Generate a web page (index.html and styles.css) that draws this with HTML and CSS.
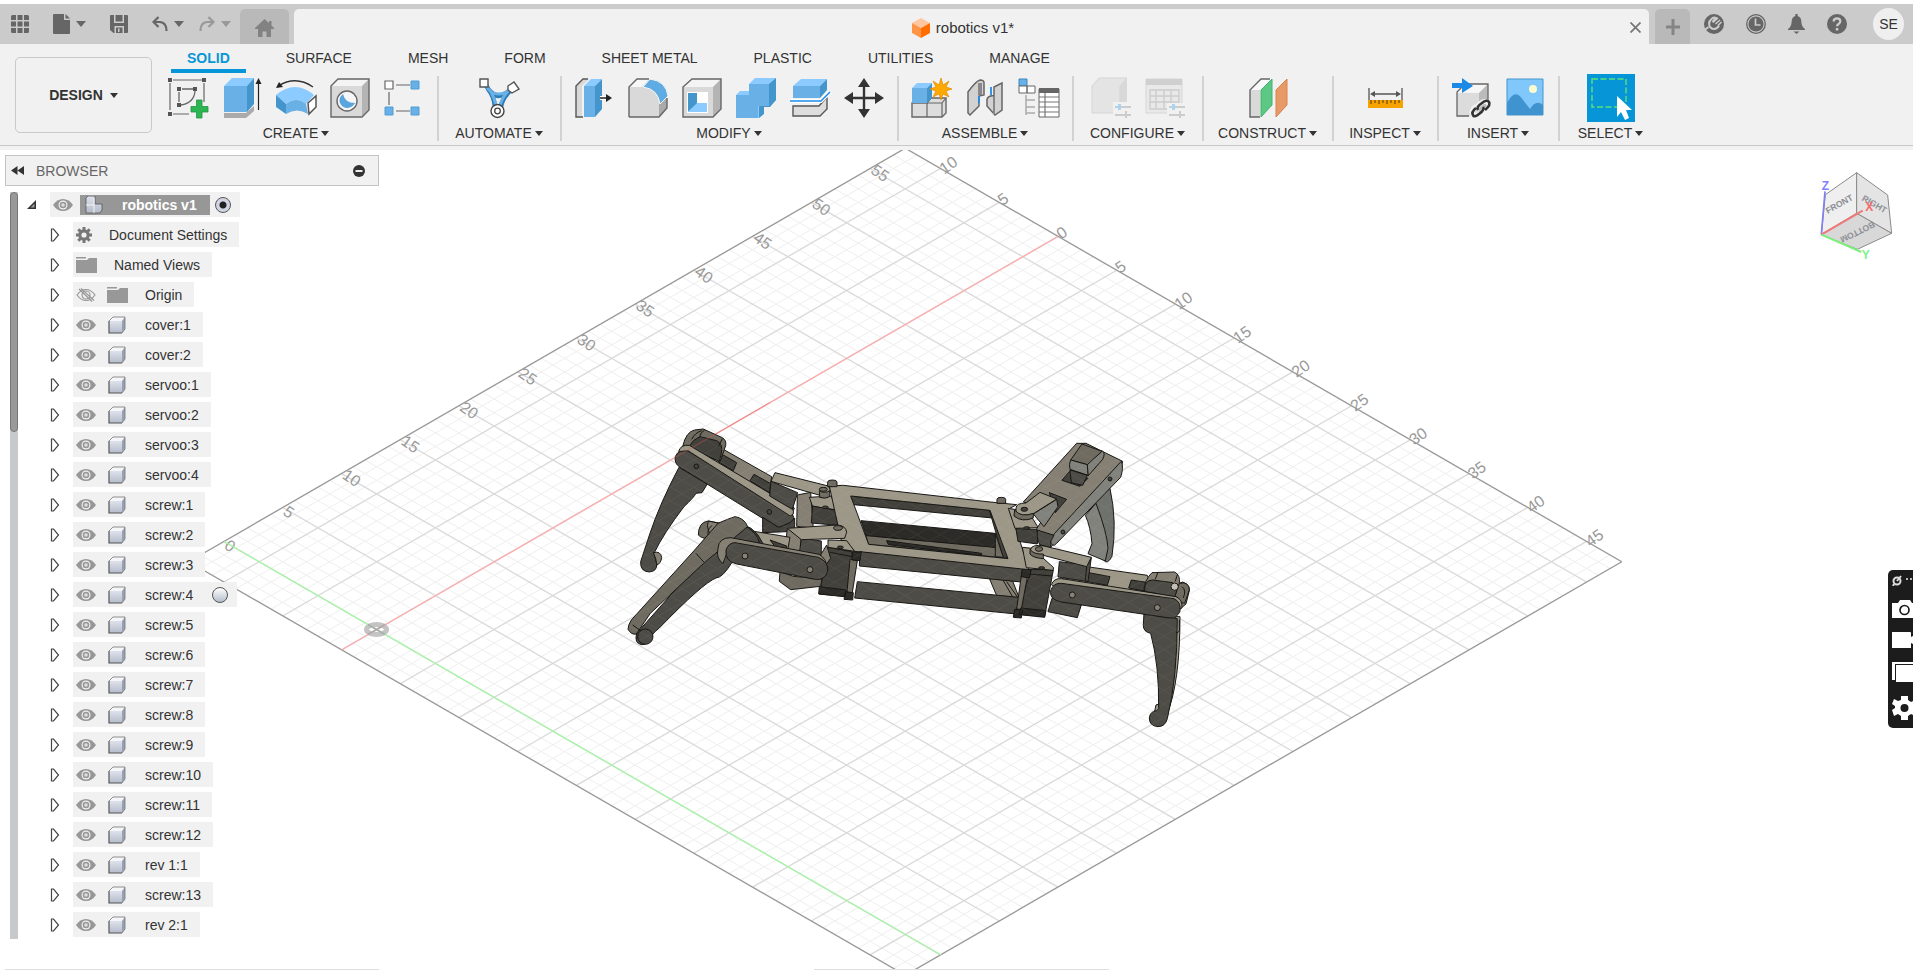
FILE: index.html
```
<!DOCTYPE html>
<html lang="en">
<head>
<meta charset="utf-8">
<title>robotics v1*</title>
<link rel="stylesheet" href="styles.css">
</head>
<body>
<svg class="sprite" aria-hidden="true">
  <defs>
    <linearGradient id="cubeFace" x1="0" y1="0" x2="0" y2="1"><stop offset="0" stop-color="#dfe2ec"/><stop offset="1" stop-color="#b4bbca"/></linearGradient>
    <symbol id="i-open" viewBox="0 0 10 14"><path d="M1.5 1h2L8.500 7 3.500 13h-2z" fill="#fff" stroke="#444" stroke-width="1.200"/></symbol>
    <symbol id="i-eye" viewBox="0 0 20 14"><path d="M0 7Q4 1 10 1t10 6q-4 6-10 6T0 7z" fill="#979797"/><circle cx="10" cy="7" r="4.500" fill="#f1f1f1"/><circle cx="10" cy="7" r="3.300" fill="#979797"/><circle cx="10" cy="7" r="1.800" fill="#ddd"/></symbol>
    <symbol id="i-eyeoff" viewBox="0 0 20 14"><g fill="none" stroke="#979797" stroke-width="1.200"><path d="M1 7q4-5.500 9-5.500T19 7q-4 5.500-9 5.500T1 7z"/><circle cx="10" cy="7" r="4"/><path d="M3 1l13 12.500M5 .5l13 12"/></g></symbol>
    <symbol id="i-cube" viewBox="0 0 18 18"><path d="M1 5l4-4h12l-3 4z" fill="#f6f6f8"/><path d="M14 5l3-4v12l-3 4z" fill="#98a1b3"/><path d="M1 5h13v12H1z" fill="url(#cubeFace)"/><path d="M1 5l4-4h12v12l-3 4" fill="none" stroke="#777" stroke-width=".8"/><path d="M1 5v12h13" fill="none" stroke="#555" stroke-width="1.200"/></symbol>
    <symbol id="i-folder" viewBox="0 0 21 16"><path d="M0 0h10v1.500H0zM0 3h11l2-2h8v15H0z" fill="#989898"/></symbol>
  </defs>
</svg>

<div class="app">
<header class="titlebar">
  <div class="quick">
    <button class="icon-btn" aria-label="Data panel"><svg width="18" height="18" viewBox="0 0 18 18" fill="#666"><path d="M0 1.500Q0 0 1.500 0H5v5H0zM6.500 0h5v5h-5zM13 0h3.500Q18 0 18 1.500V5h-5zM0 6.500h5v5H0zM6.500 6.500h5v5h-5zM13 6.500h5v5h-5zM0 13h5v5H1.500Q0 18 0 16.500zM6.500 13h5v5h-5zM13 13h5v3.500q0 1.500-1.500 1.500H13z"/></svg></button>
    <button class="icon-btn" aria-label="File"><svg width="17" height="20" viewBox="0 0 17 20" fill="#666"><path d="M1 0h10v6h6v13q0 1-1 1H1q-1 0-1-1V1q0-1 1-1z"/><path d="M12.500 0L17 4.600h-4.500z"/></svg><span class="caret caret--lg"></span></button>
    <button class="icon-btn" aria-label="Save"><svg width="18" height="18" viewBox="0 0 18 18"><path d="M1 0h16q1 0 1 1v16q0 1-1 1H3.500L0 15V1q0-1 1-1z" fill="#666"/><path d="M4 0h1.500v6.500h7V0H14v8H4zM4.500 18v-7H14v7h-1.500v-5.500H6V18z" fill="#ccc"/><path d="M8 13.500h1.500V17H8z" fill="#ccc"/></svg></button>
    <div class="history">
      <button class="icon-btn" aria-label="Undo"><svg width="16" height="16" viewBox="0 0 16 16" fill="none" stroke="#666" stroke-width="2.200"><path d="M6.500 1L1.500 6l5 5M1.500 6H8q6.500.5 6.500 9"/></svg><span class="caret caret--lg"></span></button>
      <button class="icon-btn" aria-label="Redo"><svg width="16" height="16" viewBox="0 0 16 16" fill="none" stroke="#999" stroke-width="2.200"><path d="M9.500 1l5 5-5 5M14.500 6H8Q1.500 6.500 1.500 15"/></svg><span class="caret caret--lg caret--dim"></span></button>
    </div>
  </div>
  <button class="tab tab--home" aria-label="Home"><svg width="19" height="18" viewBox="0 0 19 18" fill="#828282"><path d="M9.500 0L14 4V2h2.500v4.500L19 9v1h-3v8h-4.500v-5.500h-4V18H3v-8H0V9z"/></svg></button>
  <div class="tab tab--doc">
    <div class="doc-title"><svg width="18" height="20" viewBox="0 0 18 20"><path d="M9 0l9 5-9 5-9-5z" fill="#ffc7a0"/><path d="M0 5l9 5v10l-9-5z" fill="#ff9447"/><path d="M18 5l-9 5v10l9-5z" fill="#ff6d00"/></svg><span>robotics v1*</span></div>
    <button class="icon-btn" aria-label="Close tab"><svg width="11" height="11" viewBox="0 0 11 11" stroke="#777" stroke-width="1.800"><path d="M.5.5l10 10M10.500.5l-10 10"/></svg></button>
  </div>
  <button class="tab tab--new" aria-label="New tab"><svg width="14" height="16" viewBox="0 0 14 16" fill="#858585"><path d="M5.500 0h3v6.500H14v3H8.500V16h-3V9.500H0v-3h5.500z"/></svg></button>
  <div class="account">
    <button class="icon-btn" aria-label="Extensions"><svg width="20" height="20" viewBox="0 0 20 20"><circle cx="10" cy="10" r="10" fill="#666"/><path d="M0 16.500l4.500-3.500M6 13Q3.500 8 8 4.500q2-1.500 4-.5L8.500 8M6 13q2.500 3 6 1.500 2-.7 3-3" fill="none" stroke="#ccc" stroke-width="2"/><path d="M9 8.500L14 4M11.500 10l4.500-4M14 11.500l3.500-3.500" stroke="#ccc" stroke-width="1.500"/></svg></button>
    <button class="icon-btn" aria-label="Job status"><svg width="20" height="20" viewBox="0 0 20 20"><circle cx="10" cy="10" r="9.300" fill="none" stroke="#666" stroke-width="1.300"/><circle cx="10" cy="10" r="7.600" fill="#666"/><path d="M9.500 4.500V11h5" fill="none" stroke="#ccc" stroke-width="1.700"/></svg></button>
    <button class="icon-btn" aria-label="Notifications"><svg width="17" height="20" viewBox="0 0 17 20" fill="#666"><path d="M7.300 0h2.400v2Q13 3 13.300 7q.2 6 3.700 8v1H0v-1q3.500-2 3.700-8Q4 3 7.300 2zM5.500 17.500h6L8.500 20z"/></svg></button>
    <button class="icon-btn" aria-label="Help"><svg width="20" height="20" viewBox="0 0 20 20"><circle cx="10" cy="10" r="10" fill="#666"/><path d="M6.500 7.500Q7 4.300 10 4.300q3.300.1 3.300 3 0 1.600-1.700 2.600-1.600 1-1.600 2.300" fill="none" stroke="#ccc" stroke-width="2.300"/><path d="M8.800 14h2.500v2.500H8.800z" fill="#ccc"/></svg></button>
    <button class="avatar">SE</button>
  </div>
</header>

<div class="ribbon">
  <button class="workspace">DESIGN <span class="caret"></span></button>
  <div class="ribbon-main">
    <nav class="ribbon-tabs">
      <button class="rtab rtab--on">SOLID</button><button class="rtab">SURFACE</button><button class="rtab">MESH</button><button class="rtab">FORM</button><button class="rtab">SHEET METAL</button><button class="rtab">PLASTIC</button><button class="rtab">UTILITIES</button><button class="rtab">MANAGE</button>
    </nav>
    <div class="groups">
      <section class="group">
        <div class="tools">
          <button class="tool" aria-label="Create sketch"><svg viewBox="0 0 40 40"><path d="M5 2h29M2 5v27M5 36h16M36 5v19" stroke="#666" stroke-width="1.200" fill="none"/><path d="M11 14v10M14 11h11M27 13q-1 12-14 14" stroke="#666" stroke-width="1.300" fill="none"/><path d="M0 0h4v4H0zM34 0h4v4h-4zM0 34h4v4H0zM9 9h4v4H9zM25 9h4v4h-4zM9 25h4v4H9z" fill="#555"/><path d="M28.500 22h5.500v6.500h6V34h-6v6h-5.500v-6H23v-5.500h5.500z" fill="#2db552" stroke="#219440" stroke-width=".8"/></svg></button>
          <button class="tool" aria-label="Extrude"><svg viewBox="0 0 40 40"><path d="M2 35h22l8-7v5l-8 7H2z" fill="#aaa"/><path d="M2 8l8-8h22l-7 8z" fill="#8bcbff"/><path d="M2 8h23v26H2z" fill="#68b0e5"/><path d="M25 8l7-8v26l-7 8z" fill="#4595cd"/><path d="M36.500 3v29" stroke="#222" stroke-width="1.200"/><path d="M36.500 0l3 6h-6z" fill="#222"/></svg></button>
          <button class="tool" aria-label="Revolve"><svg viewBox="0 0 40 40"><path d="M0 17Q19 1 38 17l-8 9q-11-8-20 0z" fill="#8bcbff"/><path d="M0 17l10 9v10L0 29z" fill="#4595cd"/><path d="M10 26Q20 18 30 26l2 10q-11-7-22 0z" fill="#68b0e5"/><path d="M32 25l8-7v11l-7 7z" fill="#fff" stroke="#555" stroke-width="1.500"/><path d="M2 8Q20-3 37 9" fill="none" stroke="#333" stroke-width="1.300"/><path d="M0 10l3-6 4 5z" fill="#222"/></svg></button>
          <button class="tool" aria-label="Hole"><svg viewBox="0 0 40 40"><path d="M1 8l7-7h31l-7 7z" fill="#f4f4f4"/><path d="M32 8l7-7v31l-7 7z" fill="#b4b4b4"/><path d="M1 8h31v31H1z" fill="#d9d9d9"/><path d="M1 8l7-7h31v31l-7 7H1z" fill="none" stroke="#666" stroke-width="1.400"/><circle cx="17" cy="23" r="10" fill="#f6f6f6" stroke="#666" stroke-width="1.400"/><path d="M13 16q-5 4-3 9 2 5 8 5 5-1 7-5-10 0-12-9z" fill="#5aa5dd"/></svg></button>
          <button class="tool" aria-label="Rectangular pattern"><svg viewBox="0 0 40 40"><path d="M12 7h14M5 14v13M12 33h14" stroke="#666" stroke-width="1.200"/><path d="M1 3h8v8H1z" fill="#fff" stroke="#666" stroke-width="1.200"/><path d="M27 3h8v8h-8zM27 29h8v8h-8zM1 29h8v8H1z" fill="#68b0e5" stroke="#4f9dd4"/></svg></button>
        </div>
        <button class="group-label">CREATE <span class="caret"></span></button>
      </section>
      <section class="group group--narrow">
        <div class="tools"><button class="tool" aria-label="Automated modeling"><svg viewBox="0 0 40 40"><path d="M7 7q4 9 12 11 9-1 14-9M9 11q6 7 7 18M31 13q-8 8-9 16" fill="none" stroke="#2f7db8" stroke-width="4.500"/><path d="M7 7q4 9 12 9 9 0 14-7M12 14q4 7 5 14M29 13q-7 8-8 15" fill="none" stroke="#68b0e5" stroke-width="3"/><circle cx="18.500" cy="33" r="6.500" fill="#fff" stroke="#444" stroke-width="1.400"/><circle cx="18.500" cy="33" r="2.800" fill="none" stroke="#444" stroke-width="1.300"/><path d="M1 1h8v8H1zM29 8l6-4 5 7-7 4-4-3z" fill="#fff" stroke="#555" stroke-width="1.400"/></svg></button></div>
        <button class="group-label">AUTOMATE <span class="caret"></span></button>
      </section>
      <section class="group">
        <div class="tools">
          <button class="tool" aria-label="Press pull"><svg viewBox="0 0 40 40"><path d="M8 39H2V8l7-7h6l-7 7z" fill="#d9d9d9"/><path d="M9 39H2V8l7-7h5" fill="none" stroke="#555" stroke-width="1.400"/><path d="M10 8l7-7h11l-7 7z" fill="#8bcbff"/><path d="M10 8h11v31H10z" fill="#68b0e5"/><path d="M21 8l7-7v30l-7 8z" fill="#4595cd"/><path d="M26 20h7" stroke="#fff" stroke-width="4"/><path d="M26 20h7" stroke="#222" stroke-width="1.500"/><path d="M32 16l6 4-6 4z" fill="#222"/></svg></button>
          <button class="tool" aria-label="Fillet"><svg viewBox="0 0 40 40"><path d="M1 39V9l8-8h12q17 3 18 19v10l-8 9z" fill="#d9d9d9"/><path d="M1 9l8-8h12l-7 8z" fill="#f7f7f7"/><path d="M31 39V26l8-6v10z" fill="#aaa"/><path d="M1 39V9l8-8h12M39 20v10l-8 9H1" fill="none" stroke="#666" stroke-width="1.400"/><path d="M15 9l7-8q16 2 18 17l-8 8Q30 11 15 9z" fill="#5fabe3" stroke="#f6f6f6"/></svg></button>
          <button class="tool" aria-label="Shell"><svg viewBox="0 0 40 40"><path d="M1 9l9-8h29l-8 8z" fill="#f4f4f4"/><path d="M31 9l8-8v30l-8 8z" fill="#b4b4b4"/><path d="M1 9h30v30H1z" fill="#d9d9d9"/><path d="M1 9l9-8h29v30l-8 8H1z" fill="none" stroke="#666" stroke-width="1.400"/><path d="M5 14h21v21H5z" fill="#fff"/><path d="M6 15h9v11l-9 8z" fill="#4595cd"/><path d="M15 25h10v9H6z" fill="#8bcbff"/></svg></button>
          <button class="tool" aria-label="Combine"><svg viewBox="0 0 40 40"><path d="M0 17l4-4h9V6l6-6h21v22l-7 7h-6v7l-4 4H0z" fill="#8bcbff"/><path d="M0 17h13V6h20v22H22v12H0z" fill="#68b0e5"/><path d="M33 6l7-6v22l-6 7h-6v7l-5 4V28h10z" fill="#4595cd"/></svg></button>
          <button class="tool" aria-label="Split body"><svg viewBox="0 0 40 40"><path d="M3 28h26l8-9v12l-7 7H3z" fill="#ddd" stroke="#555" stroke-width="1.400"/><path d="M3 8l8-7h26l-7 7z" fill="#8bcbff"/><path d="M3 8h27v12H3z" fill="#68b0e5"/><path d="M30 8l7-7v11l-7 8z" fill="#4595cd"/><path d="M0 23h31l9-9" fill="none" stroke="#fff" stroke-width="4"/><path d="M0 23h31l9-9" fill="none" stroke="#1d8ce8" stroke-width="1.500"/></svg></button>
          <button class="tool" aria-label="Move"><svg viewBox="0 0 40 40"><path d="M20 6v28M6 20h28" stroke="#333" stroke-width="2.400"/><path d="M20 0l6 9H14zM20 40l6-9H14zM0 20l9-6v12zM40 20l-9-6v12z" fill="#333"/></svg></button>
        </div>
        <button class="group-label">MODIFY <span class="caret"></span></button>
      </section>
      <section class="group">
        <div class="tools">
          <button class="tool" aria-label="New component"><svg viewBox="0 0 40 40"><path d="M1 25h15l4-5h15v15l-4 4H1z" fill="#ddd" stroke="#666" stroke-width="1.400"/><path d="M16 39V25h15l4-5M31 25v14" fill="none" stroke="#666" stroke-width="1.200"/><path d="M1 10l5-5h15l-5 5z" fill="#8bcbff"/><path d="M1 10h15v15H1z" fill="#68b0e5"/><path d="M16 10l5-5v15l-5 5z" fill="#4595cd"/><path d="M30 0l2 7 6-4-3 6 6 2-6 2 3 6-6-3-2 6-2-6-6 3 3-6-6-2 6-2-3-6 6 4z" fill="#ffa800" stroke="#e08c00" stroke-width=".7"/></svg></button>
          <button class="tool" aria-label="Joint"><svg viewBox="0 0 40 40"><path d="M3 14Q11 3 15 2q4 0 4 3v12l-5 1v10L5 37l-2-2z" fill="#d2d2d2" stroke="#666" stroke-width="1.500"/><path d="M15 5v12" stroke="#888" stroke-width="4"/><path d="M22 21q2-4 7-3V9l8-4v27l-7 5-8-9z" fill="#d2d2d2" stroke="#666" stroke-width="1.500"/><path d="M29 18v18" stroke="#888" stroke-width="2"/><path d="M14 18v7M26 9v8" stroke="#1d8ce8" stroke-width="1.800"/></svg></button>
          <button class="tool" aria-label="Bill of materials"><svg viewBox="0 0 40 40"><path d="M0 1h8v7H0z" fill="#68b0e5" stroke="#3d87bd"/><path d="M0 8h8v7H0zM8 8h8v7H8z" fill="#fff" stroke="#666"/><path d="M7 17v20M7 22h9M7 29h9M7 35h9" stroke="#aaa" stroke-width="1.500"/><path d="M20 11h20v28H20z" fill="#fff" stroke="#666"/><path d="M20 10h20v5H20z" fill="#666"/><path d="M20 19h20M20 24h20M20 29h20M20 34h20M26 15v24" stroke="#777" stroke-width="1.200"/></svg></button>
        </div>
        <button class="group-label">ASSEMBLE <span class="caret"></span></button>
      </section>
      <section class="group group--mid">
        <div class="tools">
          <button class="tool" aria-label="Configure" disabled><svg viewBox="0 0 40 40"><path d="M1 8l7-8h28l-7 8v27H1z" fill="#e4e4e4" stroke="#d5d5d5"/><path d="M29 8l7-8v24l-7 5z" fill="#d8d8d8"/><path d="M22 24h18v16H22z" fill="#f1f1f1"/><path d="M24 29h16M24 37h16M29 26v6M35 33v7" stroke="#ccc" stroke-width="2"/><path d="M26 29h5M28 26v6" stroke="#a9d4f3" stroke-width="2"/></svg></button>
          <button class="tool" aria-label="Configuration table" disabled><svg viewBox="0 0 40 40"><path d="M1 1h36v34H1z" fill="#e9e9e9" stroke="#d5d5d5"/><path d="M1 1h36v6H1z" fill="#d0d0d0"/><path d="M5 12h29v19H5zM5 18h29M5 24h29M11 12v19M19 12v19M26 12v19" fill="none" stroke="#ccc" stroke-width="1.400"/><path d="M22 25h18v15H22z" fill="#f1f1f1"/><path d="M24 29h16M24 37h16M29 26v6M35 33v7" stroke="#ccc" stroke-width="2"/><path d="M26 29h5M28 26v6" stroke="#a9d4f3" stroke-width="2"/></svg></button>
        </div>
        <button class="group-label">CONFIGURE <span class="caret"></span></button>
      </section>
      <section class="group group--mid">
        <div class="tools"><button class="tool" aria-label="Offset plane"><svg viewBox="0 0 40 40"><path d="M2 12L14 1h9L12 12v27H2z" fill="#fafafa"/><path d="M2 12h10v27H2z" fill="#d9d9d9"/><path d="M12 39H2V12L13 1h9" fill="none" stroke="#666" stroke-width="1.400"/><path d="M13 12L24 1v26L13 39z" fill="#5cc883" stroke="#45b26d"/><path d="M28 12L39 1v26L28 39z" fill="#e89a66" stroke="#d6844c"/></svg></button></div>
        <button class="group-label">CONSTRUCT <span class="caret"></span></button>
      </section>
      <section class="group group--slim">
        <div class="tools"><button class="tool" aria-label="Measure"><svg viewBox="0 0 40 40"><path d="M4 10v12M37 10v12M7 16h26" stroke="#555" stroke-width="1.300"/><path d="M5 16l5-3v6zM36 16l-5-3v6z" fill="#555"/><path d="M3 22h35v8H3z" fill="#f6a200"/><path d="M6 22v4M10 22v3M14 22v4M18 22v3M22 22v4M26 22v3M30 22v4M34 22v3" stroke="#704900" stroke-width="1.200"/></svg></button></div>
        <button class="group-label">INSPECT <span class="caret"></span></button>
      </section>
      <section class="group">
        <div class="tools">
          <button class="tool" aria-label="Insert derive"><svg viewBox="0 0 40 40"><path d="M6 14l8-8h23l-9 9z" fill="#f6f6f6"/><path d="M28 15l9-9v24l-9 7z" fill="#bbb"/><path d="M6 15h22v23H6z" fill="#dcdcdc"/><path d="M18 38H6V14l8-8h23v16" fill="none" stroke="#666" stroke-width="1.300"/><path d="M1 5h10V0l11 8-11 7v-5H1z" fill="#1b8ae6"/><g fill="none" stroke="#f1f1f1" stroke-width="5"><path d="M26 29q5-7 10-5 5 3-1 8M34 31q-5 8-11 6-5-3 2-9"/></g><g fill="none" stroke="#333" stroke-width="2.600"><path d="M27 32q-2-3 4-7 5-4 7-1 2 3-4 8M32 29q2 3-4 7-5 4-6 1-2-3 3-7"/></g></svg></button>
          <button class="tool" aria-label="Insert image"><svg viewBox="0 0 40 40"><path d="M2 1h36v36H2z" fill="#80c8fb" stroke="#4595cd"/><circle cx="28" cy="11" r="4" fill="#fffbd0"/><path d="M2 25q8-16 16-3l7 9q6-10 13-4v10H2z" fill="#3f93cf"/></svg></button>
        </div>
        <button class="group-label">INSERT <span class="caret"></span></button>
      </section>
      <section class="group group--last">
        <div class="tools"><button class="tool tool--on" aria-label="Select"><svg viewBox="0 0 40 40"><path d="M1 1h34v28H1z" fill="none" stroke="#5be07c" stroke-width="1.400" stroke-dasharray="6 2.500"/><path d="M26 18v21l4-5 4 8 4-2-3-8h6z" fill="#fff"/></svg></button></div>
        <button class="group-label">SELECT <span class="caret"></span></button>
      </section>
    </div>
  </div>
</div>

<main class="viewport">
  <svg class="scene" viewBox="0 150 1913 820" preserveAspectRatio="xMinYMin slice" role="img" aria-label="Walking robot on the ground grid">
    <g id="grid"></g>
    <g id="labels" class="grid-labels"></g>
    <ellipse cx="376.500" cy="629.500" rx="10" ry="5" fill="none" stroke="#c4c4c4" stroke-width="5"/>
    <path d="M341.500 650L1058 236.500" stroke="#ffaaaa" stroke-width="1.300"/>
    <path d="M224 541.500L941 955" stroke="#a4f7a4" stroke-width="1.300"/>
    <path d="M368 624.500l17 10M368 634.500l17-10" stroke="#aaa" stroke-width="1.500"/>

    <g class="model">
      <!-- rear left leg -->
      <g transform="translate(600 410) scale(.3333)">
        <path class="d2" d="M237 172Q180 280 150 370L122 455q-2 30 26 31 24-2 22-24l-8-32q30-62 90-140 30-28 36-40l18-2 16-26z"/>
        <path class="l2" d="M160 428q22-6 25 14-2 18-14 23-2-18-11-37z"/>
        <path class="l2" d="M370 118l145 82-7 50 75 44-10 26-308-205z"/>
        <path class="d1" d="M370 135l40 23-10 24-45-26zM462 193l50 28-3 28-59-37z"/>
        <path class="l3" d="M248 110q10-45 36-50l26-3 57 26q13 8 10 24l-16 46-60-20z"/>
        <path class="d1" d="M265 112q15-25 35-32l50 12q20 10 14 38l-6 24z"/>
        <path class="ln" d="M275 88q10-20 30-26M298 82q4-16 16-22M355 110l12-24"/>
        <path class="d2" d="M262 122q-26-6-36 18-4 20 14 32l295 182q25 6 40-14 14-20-4-32z"/>
        <path class="l1" d="M236 125q5-22 32-19l302 180q12 8 10 26l-9 6L264 122z"/>
        <circle class="d1" cx="289" cy="169" r="7"/><circle class="d1" cx="508" cy="306" r="7"/>
      </g>
      <!-- rear left bracket and servo -->
      <g transform="translate(760 470) scale(.3333)">
        <path class="d1" d="M8 142l48 30 34-14 14-14v40l-96 4z"/>
        <path class="d2" d="M33 34l80 34-16 50-68-40z"/>
        <path class="l1" d="M45 8l160 40q10 10 2 22l-20 8L33 34z"/>
        <path class="l2" d="M112 75l40-8 8 108-50-6z"/>
        <path class="l1" d="M148 82l65-4 20 42-75-10z"/>
        <path class="d1" d="M158 108l76 14 10 45-90-8z"/>
        <path class="l3" d="M178 62q14 10 32 0l-1 18q-14 8-30 2z"/>
        <ellipse class="l3" cx="190" cy="58" rx="12" ry="6"/>
      </g>
      <!-- chassis -->
      <g transform="translate(760 470) scale(.3333)">
        <path class="d0" d="M303 152l402 38 8 45-395-38z"/>
        <path class="l3" d="M318 197l395 36 30 32-418-42z"/>
        <path class="d0" d="M380 212l285 38v6l-280-32z"/>
        <path class="l2" d="M688 325l70 8 20 52-68-8zM740 335l35 50"/>
        <path class="ln" d="M730 332l30 52"/>
        <path class="d1" d="M272 78l420 42 6 24-418-40z"/>
        <path class="d1" d="M688 120l18 6 38 138h-14z"/>
        <path class="l3" d="M706 190l24 72-24-2z"/>
        <path fill-rule="evenodd" class="l1" d="M208 48l42-2 440 50 80 8-22 12 60 184-90-3-468-57zM272 78l54 145 418 43-54-145z"/>
        <path class="d2" d="M300 245l495 53-12 38-485-48z"/>
        <path class="d2" d="M292 335l485 47-8 50-485-48z"/>
        <path class="d1" d="M204 232l74 14-18 134-82-8z"/>
        <path class="l1" d="M204 210l56 2 24 32-80-12z"/>
        <path class="l3" d="M270 268l22 4-15 96-16-2z"/>
        <path class="d0" d="M276 246h28l-4 26-22-2zM256 366l24 2-2 22-26-2zM178 350l80 10-2 20-80-8z"/>
        <path class="ln" d="M205 246l72 14"/>
        <path class="d1" d="M812 298l68 2-26 140-80-8z"/>
        <path class="l3" d="M784 318l18 3-18 98-14-2z"/>
        <path class="d0" d="M786 298h28l-6 26-24-4zM764 418l24 2-4 24-24-2zM782 414l76 8-4 20-76-8z"/>
        <path class="ln" d="M808 312l68 6"/>
        <path class="l1" d="M745 115l60 10 30 48-70 2zM787 232l30 3 64 58-2 8-80-8z"/>
        <path class="d1" d="M768 176l66 2-2 44-58-8z"/>
        <path class="l3" d="M203 36q0-6 14-6t14 6v14h-28zM711 88q0-6 13-6t13 6v12h-26z"/>
        <ellipse class="d1" cx="241" cy="232" rx="9" ry="4"/><ellipse class="d1" cx="196" cy="112" rx="9" ry="4"/><ellipse class="d1" cx="800" cy="174" rx="9" ry="4"/><ellipse class="d1" cx="845" cy="294" rx="9" ry="4"/>
      </g>
      <!-- front left leg -->
      <g transform="translate(600 410) scale(.3333)">
        <path class="l3" d="M540 485l40 14 86 8-4 22-90 10-34-25z"/>
        <path class="l2" d="M562 355l42 30-4 50-44-22z"/>
        <path class="d2" d="M604 385l60 8 0 46-66-8z"/>
        <path class="l1" d="M562 355l150-10q26 2 28 22l-6 18-130 4z"/>
        <ellipse class="l3" cx="714" cy="354" rx="13" ry="7"/>
        <path class="l2" d="M680 405l12 40-14 20-22-20z"/>
        <path class="l3" d="M295 375q0-38 30-42l80 15-75 40q-24-2-35-13z"/>
        <path class="l2" d="M325 333l60 13-40 40q-30-24-20-53z"/>
        <path class="ln" d="M328 386q-12-22 8-40"/>
        <path class="l1" d="M450 362l120 20-8 45-70-12z"/>
        <path class="d1" d="M510 390l50 18v12l-30-4zM400 345q60-10 90 58l-60-10z"/>
        <path class="d2" d="M440 350q30 20 38 46l-80 58q-30 50-50 50-40 16-170 150-26 20-26 34-8 16-28 16-22-4-14-34l160-180 100-110z"/>
        <path class="l3" d="M405 320q28 4 38 30l-132 110-160 150-42 62q-14 4-25-14 0-12 10-28l190-210 70-80q32-14 51-20z"/>
        <path class="ln" d="M288 430l25 28M98 645l28 20"/>
        <circle class="d2" cx="136" cy="680" r="23"/>
        <path class="l2" d="M354 415q2-32 38-32l265 50q22 12 24 38l-40 8-260-50q-12 30-12 32-22-16-15-46z"/>
        <path class="d2" d="M405 398l250 44q32 14 28 42-8 28-38 24l-235-46q-36-8-32-42 8-22 27-22z"/>
        <circle class="l2" cx="435" cy="438" r="9"/><circle class="l2" cx="630" cy="479" r="9"/>
      </g>
      <!-- rear right leg -->
      <g transform="translate(900 420) scale(.3333)">
        <path class="c1" d="M630 205q22 100 6 204-14 28-26 10-10-66-30-120l-24-44z"/>
        <path class="c2" d="M588 250q34 90 36 135l-8 38-52-22 12-30q-4-50-20-85z"/>
        <path class="l2" d="M530 70l28 0 110 54-4 18-212 240-32-6-10-50 40-60-80-20z"/>
        <path class="c2" d="M664 124q8 18-2 48L470 370q-14 16-20-10l14-20z"/>
        <path class="d2" d="M412 330l50 16q-14 16-10 38l-32-10q-10-10-8-44z"/>
        <path class="d1" d="M508 155l56 20-24 24-54-18z"/>
        <path class="c2" d="M606 92q12 6 2 26l-44 50-2-36z"/>
        <path class="l3" d="M546 72l60 22-44 40-50-14z"/>
        <path class="c2" d="M512 120l50 14 2 32-54-18q-4-14 2-28z"/>
        <path class="d2" d="M510 150l52 16-14 30-34-8z"/>
        <path class="d1" d="M448 218l52 20-34 40z"/>
        <path class="c2" d="M400 282l70-44 4 22-42 60z"/>
        <path class="l1" d="M348 265q0-16 30-16l42-32 50 20-70 44q-30 10-52-2z"/>
        <path class="l3" d="M344 270q20 24 56 10v14q-34 14-58-6z"/>
        <ellipse class="d1" cx="373" cy="268" rx="10" ry="6"/><circle class="d1" cx="630" cy="177" r="6"/><circle class="d1" cx="489" cy="336" r="6"/>
      </g>
      <!-- front right leg -->
      <g transform="translate(900 420) scale(.3333)">
        <path class="d2" d="M480 535l64 20-12 38-88-18 12-40z"/>
        <path class="l1" d="M768 855l12-4 4 30-22 4zM826 590l14 0q0 200-40 295l-12-10z"/>
        <path class="d2" d="M732 580l100 16q0 180-30 300-6 24-28 24-26-2-26-26 2-20 22-22l6-6q2-130-24-226-22-4-22-24z"/>
        <path class="ln" d="M838 600v34l-10 6"/>
        <path class="l1" d="M560 440l182 26 20 50 78 20-8 20-372-66z"/>
        <path class="d1" d="M566 458l64 12-8 26-64-12zM694 480l52 8v28l-60-12z"/>
        <path class="d2" d="M478 425l84 10 12-22-10 72-90-14z"/>
        <path class="l1" d="M392 388q4-16 40-10l142 34-14 28-130-34q-24 4-38-8z"/>
        <path class="ln" d="M560 440l-4 42"/>
        <path class="l3" d="M390 388q12 16 40 14v14q-30-2-40-14z"/>
        <ellipse class="l3" cx="417" cy="387" rx="11" ry="7"/>
        <path class="l2" d="M732 512q0-30 24-54l68-2q18 10 14 34l10-4q22 8 20 26l-10 40-24 20-20-60z"/>
        <path class="d2" d="M734 514q-2-34 24-34l60 8q16 8 10 44z"/>
        <path class="l3" d="M838 490q30-6 30 20l-14 40-20-4-8-20z"/><path class="ln" d="M846 500q14 10 4 34M766 478l8-22M826 484l6-20"/>
        <circle cx="824" cy="500" r="11" fill="#c4c0b5"/>
        <path class="l1" d="M454 494q8-20 30-18l344 54q20 8 18 34l-14 8-350-62z"/>
        <path class="d2" d="M484 490l338 46q22 10 18 38-10 22-32 20l-324-48q-36-6-32-34 8-24 32-22z"/>
        <circle class="l2" cx="517" cy="525" r="9"/><circle class="l2" cx="772" cy="563" r="9"/>
      </g>
    </g>
    <use href="#grid" opacity=".05"/>
    <path d="M675 457.500L770 402.500" stroke="#e04a4a" stroke-width="1" opacity=".4"/>
  </svg>

  <svg class="viewcube" width="133" height="130" viewBox="0 0 399 390" role="img" aria-label="View cube">
    <g stroke="#8a8a8a" stroke-width="3"><path d="M230 68l-94 66-12 120 106-64z" fill="#efefef"/><path d="M230 68l93 67 12 115-105-60z" fill="#e4e4e4"/><path d="M230 190l105 60-103 48-108-44z" fill="#d8d8d8"/></g>
    <g class="cube-text"><text transform="translate(182 170) rotate(-29)">FRONT</text><text transform="translate(279 170) rotate(30)">RIGHT</text><text transform="translate(229 238) rotate(154)">BOTTOM</text></g>
    <path d="M124 254l11-130" stroke="#8080ee" stroke-width="5"/><path d="M124 254l124-72" stroke="#f07878" stroke-width="6"/><path d="M124 254l120 52" stroke="#7cf07c" stroke-width="6"/>
    <g class="axis-text"><text x="136" y="120" fill="#8080ff">Z</text><text x="268" y="184" fill="#f56b6b">X</text><text x="257" y="327" fill="#7cf48c">Y</text></g>
  </svg>

  <aside class="browser">
    <div class="browser-head">
      <button class="icon-btn" aria-label="Collapse"><svg width="13" height="9" viewBox="0 0 13 9" fill="#333"><path d="M6.500 0v9L0 4.500zM13 0v9L6.500 4.500z"/></svg></button>
      <h2>BROWSER</h2>
      <button class="icon-btn" aria-label="Hide browser"><svg width="12" height="12" viewBox="0 0 12 12"><circle cx="6" cy="6" r="6" fill="#333"/><path d="M2.500 6h7" stroke="#f1f1f1" stroke-width="2"/></svg></button>
    </div>
    <div class="browser-body">
      <div class="scroll"><div class="thumb"></div></div>
      <ul class="tree">
        <li class="root"><button class="twist" aria-label="Collapse"><svg width="9" height="9" viewBox="0 0 9 9"><path d="M9 0v9H0z" fill="#333"/><path d="M7.500 3.500v4h-4z" fill="#999"/></svg></button><div class="node"><svg class="eye"><use href="#i-eye"/></svg><div class="picked"><svg width="18" height="18" viewBox="0 0 18 18"><path d="M1 2l2-2h7v8h7v6l-2 3H1z" fill="url(#cubeFace)" stroke="#555" stroke-width=".8"/><path d="M1 9h8V2M9 9v8" fill="none" stroke="#f4f4f4"/></svg><b>robotics v1</b></div><input type="radio" name="active" aria-label="Activate robotics v1" checked></div></li>
        <li><button class="twist" aria-label="Expand"><svg><use href="#i-open"/></svg></button><div class="node node--plain"><svg width="16" height="16" viewBox="0 0 16 16"><path d="M8 0v16M0 8h16M2.300 2.300l11.400 11.400M13.700 2.300L2.300 13.700" stroke="#777" stroke-width="3"/><circle cx="8" cy="8" r="4.200" fill="#f1f1f1" stroke="#777" stroke-width="3.200"/></svg><span>Document Settings</span></div></li>
        <li><button class="twist" aria-label="Expand"><svg><use href="#i-open"/></svg></button><div class="node node--plain"><svg class="folder"><use href="#i-folder"/></svg><span>Named Views</span></div></li>
        <li><button class="twist" aria-label="Expand"><svg><use href="#i-open"/></svg></button><div class="node"><svg class="eye"><use href="#i-eyeoff"/></svg><svg class="folder"><use href="#i-folder"/></svg><span>Origin</span></div></li>
        <li><button class="twist" aria-label="Expand"><svg><use href="#i-open"/></svg></button><div class="node"><svg class="eye"><use href="#i-eye"/></svg><svg class="cube"><use href="#i-cube"/></svg><span>cover:1</span></div></li>
        <li><button class="twist" aria-label="Expand"><svg><use href="#i-open"/></svg></button><div class="node"><svg class="eye"><use href="#i-eye"/></svg><svg class="cube"><use href="#i-cube"/></svg><span>cover:2</span></div></li>
        <li><button class="twist" aria-label="Expand"><svg><use href="#i-open"/></svg></button><div class="node"><svg class="eye"><use href="#i-eye"/></svg><svg class="cube"><use href="#i-cube"/></svg><span>servoo:1</span></div></li>
        <li><button class="twist" aria-label="Expand"><svg><use href="#i-open"/></svg></button><div class="node"><svg class="eye"><use href="#i-eye"/></svg><svg class="cube"><use href="#i-cube"/></svg><span>servoo:2</span></div></li>
        <li><button class="twist" aria-label="Expand"><svg><use href="#i-open"/></svg></button><div class="node"><svg class="eye"><use href="#i-eye"/></svg><svg class="cube"><use href="#i-cube"/></svg><span>servoo:3</span></div></li>
        <li><button class="twist" aria-label="Expand"><svg><use href="#i-open"/></svg></button><div class="node"><svg class="eye"><use href="#i-eye"/></svg><svg class="cube"><use href="#i-cube"/></svg><span>servoo:4</span></div></li>
        <li><button class="twist" aria-label="Expand"><svg><use href="#i-open"/></svg></button><div class="node"><svg class="eye"><use href="#i-eye"/></svg><svg class="cube"><use href="#i-cube"/></svg><span>screw:1</span></div></li>
        <li><button class="twist" aria-label="Expand"><svg><use href="#i-open"/></svg></button><div class="node"><svg class="eye"><use href="#i-eye"/></svg><svg class="cube"><use href="#i-cube"/></svg><span>screw:2</span></div></li>
        <li><button class="twist" aria-label="Expand"><svg><use href="#i-open"/></svg></button><div class="node"><svg class="eye"><use href="#i-eye"/></svg><svg class="cube"><use href="#i-cube"/></svg><span>screw:3</span></div></li>
        <li><button class="twist" aria-label="Expand"><svg><use href="#i-open"/></svg></button><div class="node"><svg class="eye"><use href="#i-eye"/></svg><svg class="cube"><use href="#i-cube"/></svg><span>screw:4</span><input type="radio" name="active" aria-label="Activate screw:4"></div></li>
        <li><button class="twist" aria-label="Expand"><svg><use href="#i-open"/></svg></button><div class="node"><svg class="eye"><use href="#i-eye"/></svg><svg class="cube"><use href="#i-cube"/></svg><span>screw:5</span></div></li>
        <li><button class="twist" aria-label="Expand"><svg><use href="#i-open"/></svg></button><div class="node"><svg class="eye"><use href="#i-eye"/></svg><svg class="cube"><use href="#i-cube"/></svg><span>screw:6</span></div></li>
        <li><button class="twist" aria-label="Expand"><svg><use href="#i-open"/></svg></button><div class="node"><svg class="eye"><use href="#i-eye"/></svg><svg class="cube"><use href="#i-cube"/></svg><span>screw:7</span></div></li>
        <li><button class="twist" aria-label="Expand"><svg><use href="#i-open"/></svg></button><div class="node"><svg class="eye"><use href="#i-eye"/></svg><svg class="cube"><use href="#i-cube"/></svg><span>screw:8</span></div></li>
        <li><button class="twist" aria-label="Expand"><svg><use href="#i-open"/></svg></button><div class="node"><svg class="eye"><use href="#i-eye"/></svg><svg class="cube"><use href="#i-cube"/></svg><span>screw:9</span></div></li>
        <li><button class="twist" aria-label="Expand"><svg><use href="#i-open"/></svg></button><div class="node"><svg class="eye"><use href="#i-eye"/></svg><svg class="cube"><use href="#i-cube"/></svg><span>screw:10</span></div></li>
        <li><button class="twist" aria-label="Expand"><svg><use href="#i-open"/></svg></button><div class="node"><svg class="eye"><use href="#i-eye"/></svg><svg class="cube"><use href="#i-cube"/></svg><span>screw:11</span></div></li>
        <li><button class="twist" aria-label="Expand"><svg><use href="#i-open"/></svg></button><div class="node"><svg class="eye"><use href="#i-eye"/></svg><svg class="cube"><use href="#i-cube"/></svg><span>screw:12</span></div></li>
        <li><button class="twist" aria-label="Expand"><svg><use href="#i-open"/></svg></button><div class="node"><svg class="eye"><use href="#i-eye"/></svg><svg class="cube"><use href="#i-cube"/></svg><span>rev 1:1</span></div></li>
        <li><button class="twist" aria-label="Expand"><svg><use href="#i-open"/></svg></button><div class="node"><svg class="eye"><use href="#i-eye"/></svg><svg class="cube"><use href="#i-cube"/></svg><span>screw:13</span></div></li>
        <li><button class="twist" aria-label="Expand"><svg><use href="#i-open"/></svg></button><div class="node"><svg class="eye"><use href="#i-eye"/></svg><svg class="cube"><use href="#i-cube"/></svg><span>rev 2:1</span></div></li>
      </ul>
    </div>
  </aside>

  <div class="dock-edge dock-edge--left"></div>
  <div class="dock-edge dock-edge--mid"></div>

  <div class="capture">
    <button class="icon-btn" aria-label="Recorder menu"><svg width="20" height="12" viewBox="0 0 20 12"><circle cx="5" cy="7" r="3.500" fill="none" stroke="#ddd" stroke-width="2"/><path d="M5 7l4-5M2 10l-1 2" stroke="#ddd" stroke-width="2"/><circle cx="15" cy="5" r="1" fill="#eee"/><circle cx="19" cy="5" r="1" fill="#eee"/></svg></button>
    <button class="icon-btn" aria-label="Take picture"><svg width="21" height="18" viewBox="0 0 21 18"><path d="M0 3h6l2-3h10l2 3h1v15H0z" fill="#fff"/><circle cx="12.500" cy="10" r="4.500" fill="none" stroke="#1c1c1c" stroke-width="1.700"/></svg></button>
    <button class="icon-btn" aria-label="Record video"><svg width="21" height="16" viewBox="0 0 21 16"><path d="M0 0h18q1 0 1 1v4l2-1v8l-2-1v5H0z" fill="#fff"/></svg></button>
    <button class="icon-btn" aria-label="Gallery"><svg width="21" height="20" viewBox="0 0 21 20"><path d="M0 0h21v2H3v16H0zM4 3h17v17H4z" fill="#fff"/></svg></button>
    <button class="icon-btn" aria-label="Settings"><svg width="21" height="24" viewBox="0 0 21 24"><path d="M9 0h7v4l3 2 2-1v14l-2-1-3 2v4H9v-4l-3-2-4 2-2-6 3-2v-2L0 8l2-5 4 2 3-1z" fill="#fff"/><circle cx="12.500" cy="12" r="4" fill="#1c1c1c"/></svg></button>
  </div>
</main>
</div>
<script src="script.js"></script>
</body>
</html>
```
FILE: styles.css
```
* { box-sizing: border-box; }
body { margin: 0; font: 14px/16px "Liberation Sans", Arial, sans-serif; color: #333; background: #fff; }
button { font: inherit; color: inherit; background: none; border: 0; margin: 0; padding: 0; cursor: pointer; }
svg { display: block; flex: none; }
.sprite { position: absolute; width: 0; height: 0; }
.app { display: flex; flex-direction: column; height: 100vh; overflow: hidden; }

.titlebar { display: flex; align-items: flex-end; height: 44px; flex: none; border-top: 4px solid #fff; background: #cbcbcb; }
.icon-btn { display: flex; align-items: center; gap: 6px; }
.quick { display: flex; align-items: center; align-self: stretch; gap: 24px; padding: 0 9px 0 11px; }
.history { display: flex; gap: 15px; }
.caret { display: inline-block; border: 4px solid transparent; border-top: 5px solid currentColor; border-bottom: 0; }
.caret--lg { border-width: 5px; border-top-width: 6px; border-bottom: 0; color: #666; }
.caret--dim { color: #999; }
.tab { display: flex; align-items: center; justify-content: center; height: 35px; border-radius: 5px 5px 0 0; }
.tab--home { width: 49px; background: #b9b9b9; padding-top: 3px; }
.tab--doc { flex: 1; margin: 0 6px 0 5px; padding: 2px 8px 0 2px; background: #f1f1f1; }
.doc-title { flex: 1; display: flex; justify-content: center; align-items: center; gap: 6px; font-size: 15px; }
.tab--new { width: 35px; background: #b9b9b9; }
.account { display: flex; align-items: center; align-self: stretch; gap: 22px; padding: 0 9px 0 14px; }
.avatar { width: 31px; height: 32px; margin-left: 4px; border-radius: 50%; background: #efefef; }

.ribbon { display: flex; flex: none; height: 106px; padding: 0 0 0 15px; background: #f1f1f1; border-bottom: 4px solid #f2f2f2; box-shadow: inset 0 -1px #c8c8c8; }
.workspace { display: flex; align-items: center; justify-content: center; gap: 7px; width: 137px; height: 76px; margin-top: 13px; border: 1px solid #c9c9c9; border-radius: 5px; font-weight: bold; }
.ribbon-main { flex: 1; min-width: 0; }
.ribbon-tabs { display: flex; gap: 24px; padding-left: 19px; }
.rtab { height: 29px; padding: 2px 16px 0; border-bottom: 4px solid transparent; white-space: nowrap; }
.rtab--on { color: #0696d7; font-weight: bold; border-color: #0696d7; }
.groups { display: flex; padding: 3px 0 0 4px; }
.group { display: flex; flex-direction: column; align-items: center; height: 65px; padding: 0 6px 0 5px; border-right: 2px solid #d2d2d2; }
.group--narrow { width: 123px; }
.group--mid { width: 130px; }
.group--slim { width: 105px; }
.group--last { width: 102px; border: 0; }
.tools { display: flex; height: 43px; align-items: center; }
.tool { display: flex; justify-content: center; width: 54px; }
.tool svg { width: 40px; height: 40px; overflow: visible; }
.tool--on { width: 48px; height: 48px; background: #0696d7; align-items: center; }
.group-label { display: flex; align-items: center; gap: 3px; margin-top: 6px; white-space: nowrap; }

.viewport { position: relative; flex: 1; min-height: 0; overflow: hidden; }
.scene { position: absolute; inset: 0; width: 100%; height: 100%; }
.grid-labels { font-size: 16px; fill: #999; text-anchor: middle; }
.minor { stroke: #f0f0f0; }
.major { stroke: #dadada; stroke-width: 1.300; }
.edge { stroke: #999; stroke-width: 1.300; fill: none; }
.model path, .model circle, .model ellipse { stroke: #171613; stroke-width: 3; stroke-linejoin: round; }
.model .l1 { fill: #9d9788; }
.model .l2 { fill: #858073; }
.model .l3 { fill: #6f6b60; }
.model .d2 { fill: #4e4c46; }
.model .d1 { fill: #43413c; }
.model .d0 { fill: #2d2b27; }
.model .c1 { fill: #6f726c; }
.model .c2 { fill: #80827b; }
.model .ln { fill: none; }
.viewcube { position: absolute; top: 0; right: 0; }
.cube-text { font: bold 26px "Liberation Sans", Arial, sans-serif; fill: #8d9095; text-anchor: middle; }
.axis-text { font: bold 36px "Liberation Sans", Arial, sans-serif; text-anchor: middle; }

.browser { position: relative; width: 379px; padding: 5px 0 0 5px; }
.browser-head { display: flex; align-items: center; gap: 12px; height: 31px; padding: 0 13px 0 5px; background: #f1f1f1; border: 1px solid #c4c4c4; }
.browser-head h2 { flex: 1; margin: 0; font-size: 14px; font-weight: normal; color: #666; }
.browser-body { display: flex; width: max-content; padding: 6px 0 0 5px; }
.scroll { width: 8px; background: #c8c9ca; }
.thumb { height: 240px; border: 1px solid #777; border-radius: 4px; background: #999; }
.tree { list-style: none; margin: 0; padding: 0; }
.tree li { display: flex; align-items: center; height: 30px; padding: 0 0 5px 32px; }
.tree li:last-child { height: 27px; padding-bottom: 2px; }
.tree .root { padding-left: 9px; }
.twist { display: flex; width: 23px; }
li:not(.root) .twist svg { width: 10px; height: 14px; }
.node { display: flex; align-items: center; height: 25px; padding: 0 12px 0 3px; background: #f1f1f1; white-space: nowrap; }
.eye { width: 20px; height: 14px; margin-right: 11px; }
.node .cube { width: 18px; height: 18px; margin: 0 19px 0 1px; }
.node .folder { width: 21px; height: 16px; }
.node .folder + span { margin-left: 17px; }
.node--plain { gap: 17px; padding: 0 12px 0 3px; }
.node--plain .folder + span { margin-left: 0; }
.picked { display: flex; align-items: center; gap: 19px; height: 20px; padding: 0 13px 0 5px; margin-left: -4px; background: #979797; color: #fff; }
input[type="radio"] { appearance: none; width: 16px; height: 16px; margin: 0 -3px 0 19px; border: 1px solid #555; border-radius: 50%; background: linear-gradient(#fff, #b4bccb); }
.root input { margin: 0 -3px 0 5px; }
input[type="radio"]:checked { background: radial-gradient(#222 0 3px, #cfd5e2 4px); }
.dock-edge { position: absolute; bottom: 0; height: 1px; background: #dedede; }
.dock-edge--left { left: 5px; width: 374px; }
.dock-edge--mid { left: 814px; width: 295px; }
.capture { position: absolute; right: 0; top: 420px; display: flex; flex-direction: column; gap: 14px; width: 25px; padding: 4px 0 8px 4px; overflow: hidden; background: #1c1c1c; border-radius: 5px 0 0 5px; }
```
FILE: script.js
```
// Ground grid: a and b are the two plane axes, in centimetres.
const NS = "http://www.w3.org/2000/svg";
const UX = 11.746, UY = 6.779, OX = 376.7, OY = 629.5;
const A0 = -3, A1 = 58, B0 = -13, B1 = 48;
const point = (a, b) => [OX + (a + b) * UX, OY + (b - a) * UY];
const grid = document.getElementById("grid");
const labels = document.getElementById("labels");

function line(p, q, cls) {
  const el = document.createElementNS(NS, "line");
  el.setAttribute("x1", p[0]); el.setAttribute("y1", p[1]);
  el.setAttribute("x2", q[0]); el.setAttribute("y2", q[1]);
  el.setAttribute("class", cls);
  grid.appendChild(el);
}
for (const cls of ["minor", "major"]) {
  const wanted = n => (n % 5 === 0) === (cls === "major");
  for (let a = A0; a <= A1; a++) if (wanted(a)) line(point(a, B0), point(a, B1), cls);
  for (let b = B0; b <= B1; b++) if (wanted(b)) line(point(A0, b), point(A1, b), cls);
}
line(point(A0, B0), point(A1, B0), "edge");
line(point(A0, B1), point(A1, B1), "edge");
line(point(A0, B0), point(A0, B1), "edge");
line(point(A1, B0), point(A1, B1), "edge");

// One-digit labels sit closer to the edge than two-digit ones.
function label(p, dx, dy, angle, value) {
  const near = value < 10 ? 4 : 0;
  const el = document.createElementNS(NS, "text");
  el.setAttribute("transform", `translate(${p[0] + dx - near} ${p[1] + dy}) rotate(${angle})`);
  el.textContent = value;
  labels.appendChild(el);
}
for (let b = -10; b <= 45; b += 5) label(point(A1, b), 11, 1, -35, Math.abs(b));
for (let a = 0; a <= 55; a += 5) label(point(a, B0), 7, 9, 35, a);
```
